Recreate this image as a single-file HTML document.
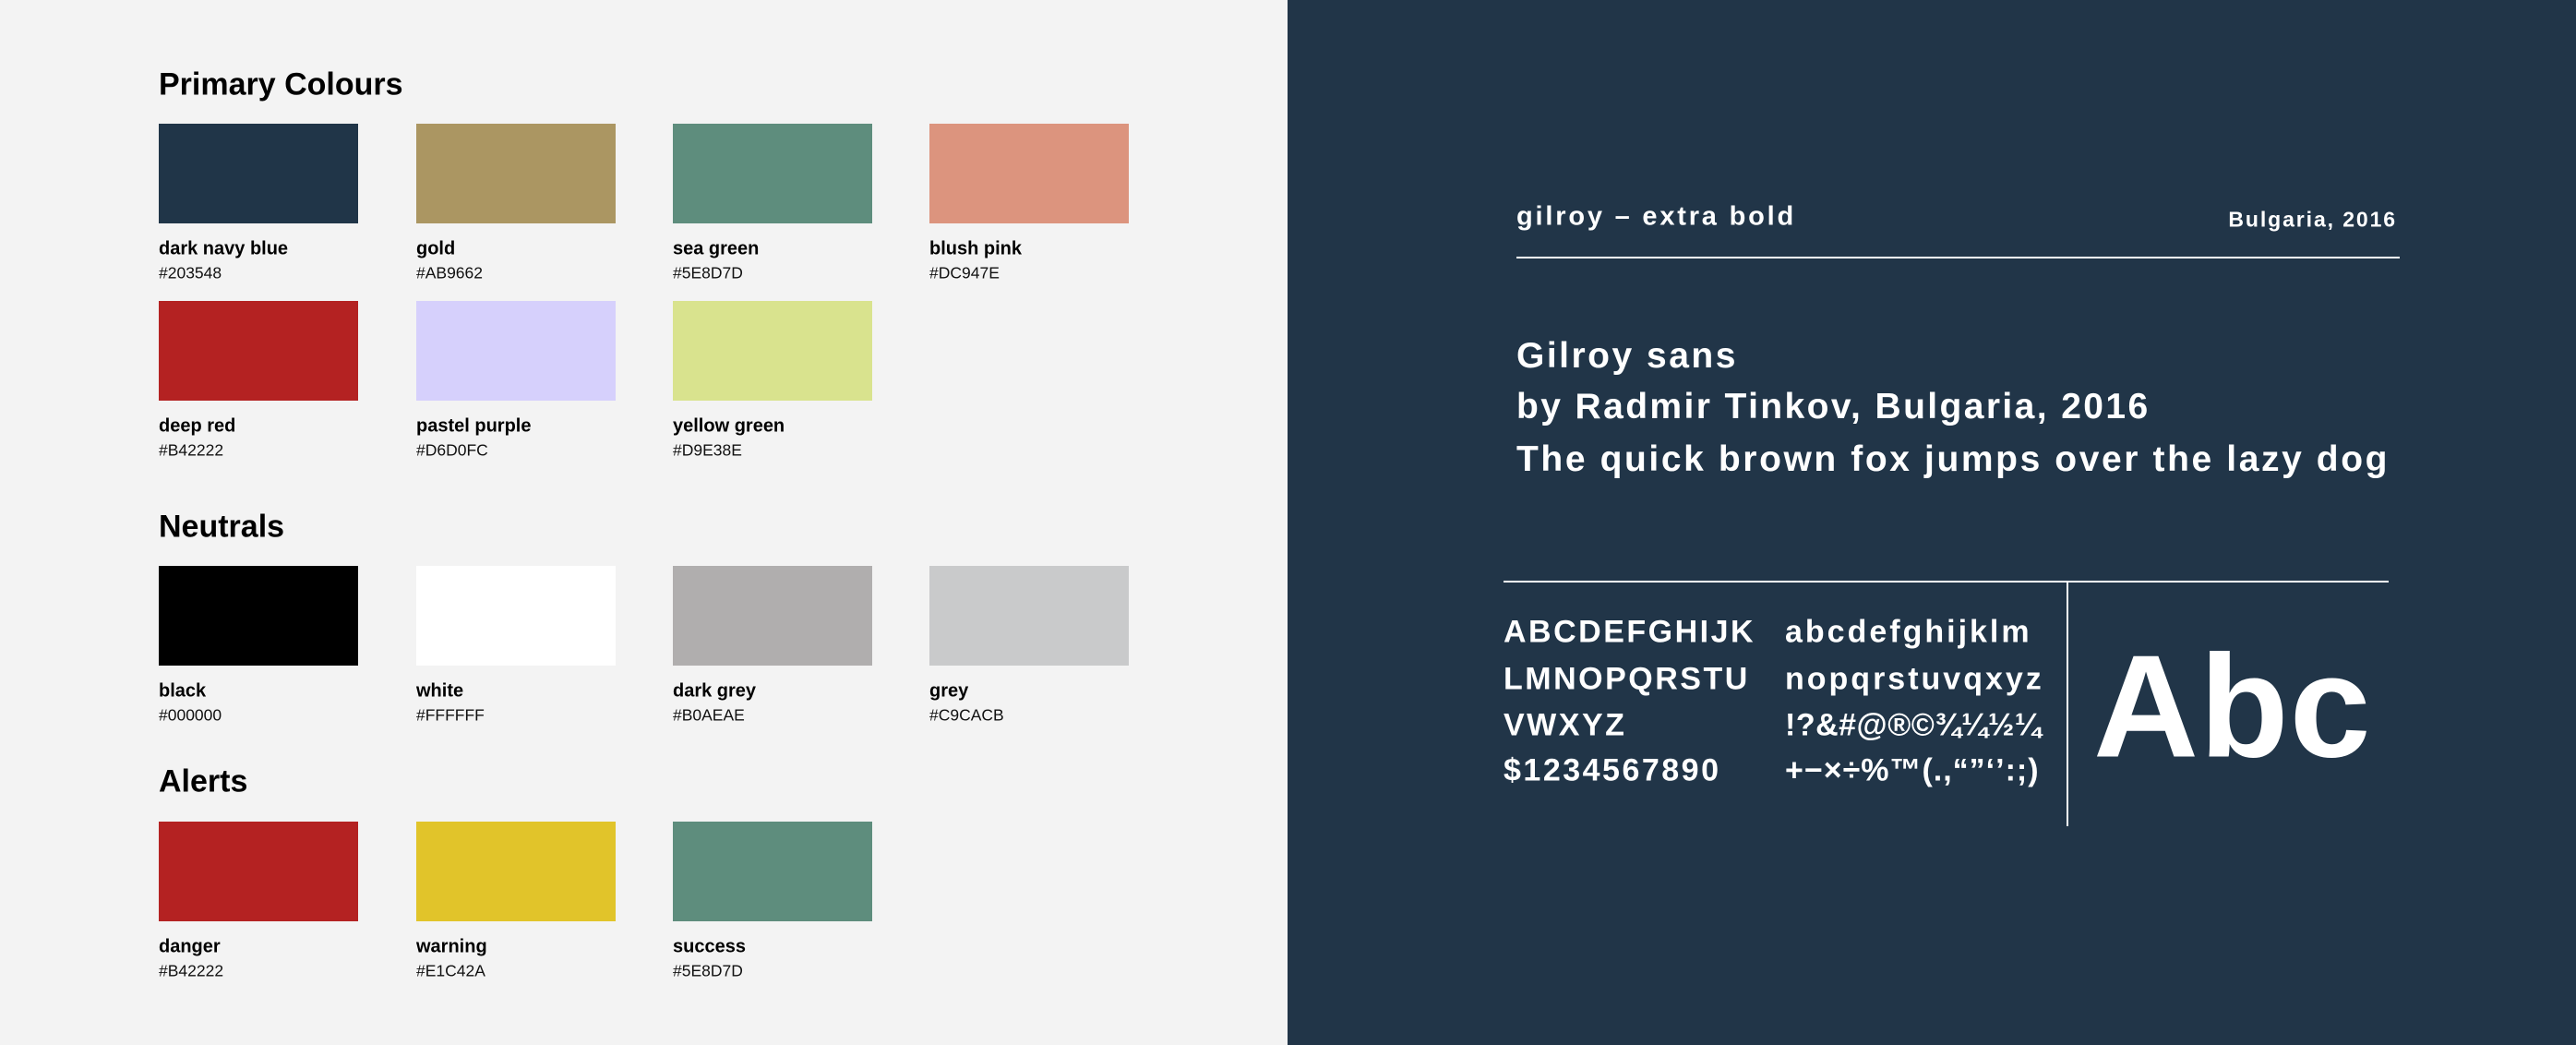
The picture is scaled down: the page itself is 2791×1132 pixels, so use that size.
<!DOCTYPE html>
<html><head><meta charset="utf-8"><style>
*{margin:0;padding:0;box-sizing:border-box}
body{width:2791px;height:1132px;position:relative;overflow:hidden;background:#f3f3f3;font-family:"Liberation Sans",sans-serif}
.a{position:absolute;white-space:nowrap}
.h{font-size:34px;font-weight:bold;color:#000;transform:translateY(-50%)}
.sw{position:absolute;width:216px;height:108px}
.n{font-size:20px;font-weight:bold;color:#000;transform:translateY(-50%)}
.x{font-size:17.5px;color:#111;transform:translateY(-50%)}
.r{position:absolute;left:1395px;top:0;width:1396px;height:1132px;background:#213548}
.w{color:#fff;font-weight:bold;transform:translateY(-50%)}
</style></head><body>
<div class="a h" style="left:172px;top:92px">Primary Colours</div>
<div class="a h" style="left:172px;top:571px">Neutrals</div>
<div class="a h" style="left:172px;top:847px">Alerts</div>

<div class="sw" style="left:172px;top:134px;background:#203548"></div>
<div class="sw" style="left:451px;top:134px;background:#AB9662"></div>
<div class="sw" style="left:729px;top:134px;background:#5E8D7D"></div>
<div class="sw" style="left:1007px;top:134px;background:#DC947E"></div>
<div class="a n" style="left:172px;top:270px">dark navy blue</div><div class="a x" style="left:172px;top:296px">#203548</div>
<div class="a n" style="left:451px;top:270px">gold</div><div class="a x" style="left:451px;top:296px">#AB9662</div>
<div class="a n" style="left:729px;top:270px">sea green</div><div class="a x" style="left:729px;top:296px">#5E8D7D</div>
<div class="a n" style="left:1007px;top:270px">blush pink</div><div class="a x" style="left:1007px;top:296px">#DC947E</div>

<div class="sw" style="left:172px;top:326px;background:#B42222"></div>
<div class="sw" style="left:451px;top:326px;background:#D6D0FC"></div>
<div class="sw" style="left:729px;top:326px;background:#D9E38E"></div>
<div class="a n" style="left:172px;top:462px">deep red</div><div class="a x" style="left:172px;top:488px">#B42222</div>
<div class="a n" style="left:451px;top:462px">pastel purple</div><div class="a x" style="left:451px;top:488px">#D6D0FC</div>
<div class="a n" style="left:729px;top:462px">yellow green</div><div class="a x" style="left:729px;top:488px">#D9E38E</div>

<div class="sw" style="left:172px;top:613px;background:#000"></div>
<div class="sw" style="left:451px;top:613px;background:#fff"></div>
<div class="sw" style="left:729px;top:613px;background:#B0AEAE"></div>
<div class="sw" style="left:1007px;top:613px;background:#C9CACB"></div>
<div class="a n" style="left:172px;top:749px">black</div><div class="a x" style="left:172px;top:775px">#000000</div>
<div class="a n" style="left:451px;top:749px">white</div><div class="a x" style="left:451px;top:775px">#FFFFFF</div>
<div class="a n" style="left:729px;top:749px">dark grey</div><div class="a x" style="left:729px;top:775px">#B0AEAE</div>
<div class="a n" style="left:1007px;top:749px">grey</div><div class="a x" style="left:1007px;top:775px">#C9CACB</div>

<div class="sw" style="left:172px;top:890px;background:#B42222"></div>
<div class="sw" style="left:451px;top:890px;background:#E1C42A"></div>
<div class="sw" style="left:729px;top:890px;background:#5E8D7D"></div>
<div class="a n" style="left:172px;top:1026px">danger</div><div class="a x" style="left:172px;top:1052px">#B42222</div>
<div class="a n" style="left:451px;top:1026px">warning</div><div class="a x" style="left:451px;top:1052px">#E1C42A</div>
<div class="a n" style="left:729px;top:1026px">success</div><div class="a x" style="left:729px;top:1052px">#5E8D7D</div>

<div class="r"></div>
<div class="a w" style="left:1643px;top:235px;font-size:29px;letter-spacing:2.8px">gilroy – extra bold</div>
<div class="a w" style="right:194px;top:238px;font-size:23px;letter-spacing:1.9px">Bulgaria, 2016</div>
<div class="a" style="left:1643px;top:278px;width:957px;height:2px;background:#fff"></div>
<div class="a w" style="left:1643px;top:386px;font-size:39px;letter-spacing:2.5px">Gilroy sans</div>
<div class="a w" style="left:1643px;top:441px;font-size:39px;letter-spacing:2.4px">by Radmir Tinkov, Bulgaria, 2016</div>
<div class="a w" style="left:1643px;top:498px;font-size:39px;letter-spacing:2.6px">The quick brown fox jumps over the lazy dog</div>
<div class="a" style="left:1629px;top:629px;width:959px;height:2px;background:#fff"></div>
<div class="a" style="left:2239px;top:630px;width:2px;height:265px;background:#fff"></div>
<div class="a w" style="left:1629px;top:685px;font-size:34px;letter-spacing:2.5px">ABCDEFGHIJK</div>
<div class="a w" style="left:1629px;top:736px;font-size:34px;letter-spacing:2.5px">LMNOPQRSTU</div>
<div class="a w" style="left:1629px;top:786px;font-size:34px;letter-spacing:2.5px">VWXYZ</div>
<div class="a w" style="left:1629px;top:835px;font-size:34px;letter-spacing:2.5px">$1234567890</div>
<div class="a w" style="left:1934px;top:685px;font-size:34px;letter-spacing:3px">abcdefghijklm</div>
<div class="a w" style="left:1934px;top:736px;font-size:34px;letter-spacing:3px">nopqrstuvqxyz</div>
<div class="a w" style="left:1934px;top:786px;font-size:34px;letter-spacing:0.5px">!?&amp;#@®©¾¼½¼</div>
<div class="a w" style="left:1934px;top:835px;font-size:34px;letter-spacing:1px">+−×÷%™(.,“”‘’:;)</div>
<div class="a w" style="left:2268px;top:766px;font-size:158px;letter-spacing:1px">Abc</div>
</body></html>
